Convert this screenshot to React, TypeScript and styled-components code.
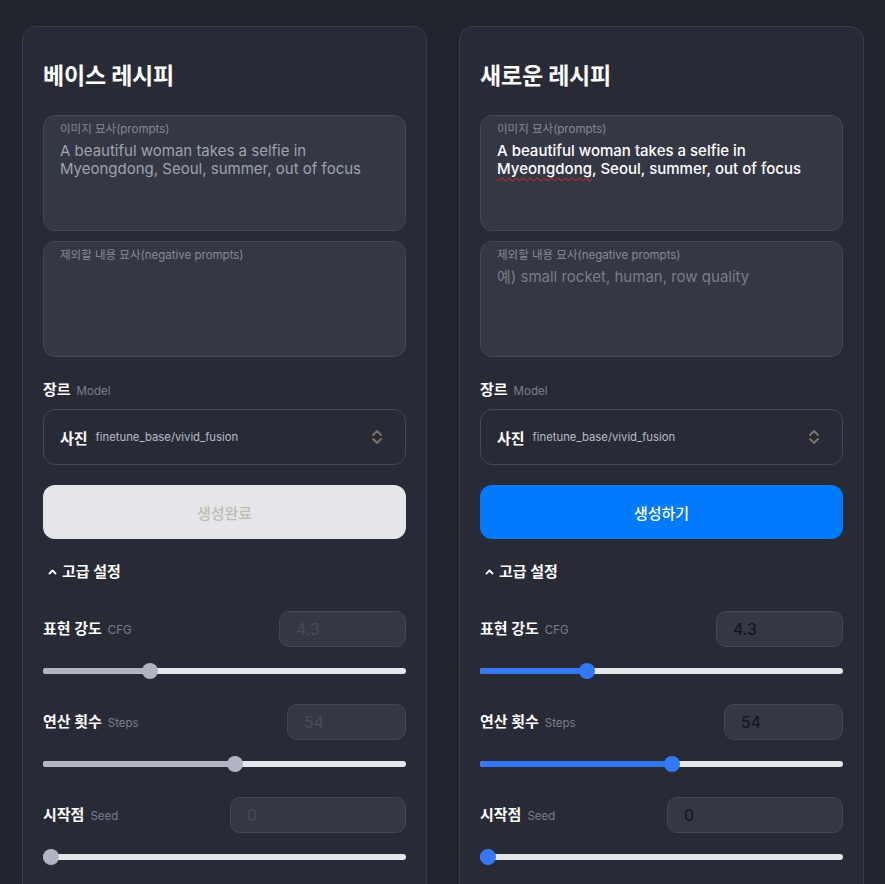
import React from "react";
import styled, { createGlobalStyle } from "styled-components";

const GlobalStyle = createGlobalStyle`
  html, body {
    margin: 0;
    padding: 0;
    background: #21242c;
  }
  body {
    font-family: Inter, "Noto Sans CJK KR", sans-serif;
    color: #f2f3f5;
  }
`;

const Page = styled.div`
  display: grid;
  grid-template-columns: 1fr 1fr;
  gap: 32px;
  padding: 26px 21px 0 22px;
  box-sizing: border-box;
  overflow: hidden;
  height: 884px;
`;

const Card = styled.section`
  background: #282b36;
  border: 1px solid #3a3d49;
  border-radius: 14px;
  padding: 34px 20px 40px;
  display: flex;
  flex-direction: column;
`;

const Title = styled.h2`
  margin: 0;
  font-size: 23px;
  line-height: 30px;
  font-weight: 700;
  color: #ffffff;
  letter-spacing: -0.2px;
`;

const PromptBox = styled.div<{ $first?: boolean }>`
  margin-top: ${(p) => (p.$first ? "24px" : "10px")};
  height: 116px;
  box-sizing: border-box;
  background: #343744;
  border: 1px solid #444754;
  border-radius: 12px;
  padding: 6px 16px;
  display: flex;
  flex-direction: column;
  gap: 6px;
`;

const PromptLabel = styled.span`
  font-size: 11.5px;
  line-height: 14px;
  color: #878a96;
`;

const PromptText = styled.div<{ $tone: "disabled" | "active" | "placeholder" }>`
  font-size: 15px;
  line-height: 18px;
  color: ${(p) =>
    p.$tone === "active" ? "#ffffff" : p.$tone === "disabled" ? "#a0a3ad" : "#7b7e8a"};
  font-weight: ${(p) => (p.$tone === "active" ? 500 : 400)};
`;

const Misspelled = styled.span`
  text-decoration: underline wavy #f0222a;
  text-decoration-thickness: 1.2px;
  text-underline-offset: 3px;
`;

const FieldLabel = styled.div<{ $top: number }>`
  margin-top: ${(p) => p.$top}px;
  display: flex;
  align-items: baseline;
  gap: 6px;
  line-height: 20px;
  white-space: nowrap;
`;

const LabelMain = styled.span`
  font-size: 15px;
  font-weight: 700;
  color: #ffffff;
`;

const LabelSub = styled.span`
  font-size: 11.5px;
  color: #7b7f8b;
`;

const Select = styled.div`
  margin-top: 8px;
  height: 56px;
  box-sizing: border-box;
  border: 1px solid #464955;
  border-radius: 12px;
  padding: 0 22px 0 16px;
  display: flex;
  align-items: center;
  gap: 8px;
`;

const SelectGenre = styled.span`
  font-size: 15px;
  font-weight: 700;
  color: #ffffff;
`;

const SelectModel = styled.span`
  flex: 1;
  font-size: 11.3px;
  color: #b9bcc5;
`;

const GenerateButton = styled.button<{ $done?: boolean }>`
  margin-top: 20px;
  height: 54px;
  border: none;
  border-radius: 12px;
  font-family: inherit;
  font-size: 15px;
  font-weight: 500;
  background: ${(p) => (p.$done ? "#e5e6ea" : "#007aff")};
  color: ${(p) => (p.$done ? "#c0bcb4" : "#ffffff")};
  cursor: ${(p) => (p.$done ? "default" : "pointer")};
`;

const AdvancedToggle = styled.div`
  margin-top: 23px;
  padding-left: 5px;
  display: flex;
  align-items: center;
  gap: 5px;
  font-size: 15px;
  font-weight: 700;
  line-height: 20px;
  color: #ffffff;
`;

const ParamRow = styled.div<{ $first?: boolean }>`
  margin-top: ${(p) => (p.$first ? "29px" : "23px")};
  display: flex;
  align-items: center;
  justify-content: space-between;
`;

const NumberInput = styled.input<{ $w: number }>`
  width: ${(p) => p.$w}px;
  height: 36px;
  box-sizing: border-box;
  background: #343744;
  border: 1px solid #444754;
  border-radius: 10px;
  padding: 0 16px;
  font-family: inherit;
  font-size: 16px;
  color: #121318;
  outline: none;
  &:disabled {
    color: #4a4d58;
    opacity: 1;
  }
`;

const SliderTrack = styled.div`
  margin-top: 14px;
  height: 20px;
  position: relative;
  display: flex;
  align-items: center;
`;

const SliderRail = styled.div`
  width: 100%;
  height: 6px;
  border-radius: 3px;
  background: #e6e7eb;
`;

const SliderFill = styled.div<{ $active: boolean }>`
  position: absolute;
  left: 0;
  top: 7px;
  height: 6px;
  border-radius: 3px;
  background: ${(p) => (p.$active ? "#3478f6" : "#b1b5c3")};
`;

const SliderThumb = styled.div<{ $active: boolean }>`
  position: absolute;
  top: 2px;
  width: 16px;
  height: 16px;
  margin-left: -8px;
  border-radius: 50%;
  background: ${(p) => (p.$active ? "#3478f6" : "#b1b5c3")};
`;

function Chevrons() {
  return (
    <svg width="12" height="18" viewBox="0 0 12 18" fill="none">
      <polyline points="2,7 6,3 10,7" stroke="#7d7467" strokeWidth="1.8" strokeLinecap="round" strokeLinejoin="round" />
      <polyline points="2,11 6,15 10,11" stroke="#7d7467" strokeWidth="1.8" strokeLinecap="round" strokeLinejoin="round" />
    </svg>
  );
}

function CaretUp() {
  return (
    <svg width="9" height="8" viewBox="0 0 9 8" fill="none">
      <polyline points="1.5,5.5 4.5,2.5 7.5,5.5" stroke="#ffffff" strokeWidth="1.8" strokeLinecap="round" strokeLinejoin="round" />
    </svg>
  );
}

function Slider({ pct, active }: { pct: number; active: boolean }) {
  const center = `calc(8px + (100% - 16px) * ${pct})`;
  return (
    <SliderTrack>
      <SliderRail />
      <SliderFill $active={active} style={{ width: center }} />
      <SliderThumb $active={active} style={{ left: center }} />
    </SliderTrack>
  );
}

const params = [
  { name: "표현 강도", sub: "CFG", value: "4.3", width: 127, pct: 0.285 },
  { name: "연산 횟수", sub: "Steps", value: "54", width: 119, pct: 0.53 },
  { name: "시작점", sub: "Seed", value: "0", width: 176, pct: 0 },
];

function RecipeCard({ title, active }: { title: string; active: boolean }) {
  return (
    <Card>
      <Title>{title}</Title>
      <PromptBox $first>
        <PromptLabel>이미지 묘사(prompts)</PromptLabel>
        <PromptText $tone={active ? "active" : "disabled"}>
          A beautiful woman takes a selfie in{" "}
          {active ? <Misspelled>Myeongdong</Misspelled> : "Myeongdong"}, Seoul, summer, out of focus
        </PromptText>
      </PromptBox>
      <PromptBox>
        <PromptLabel>제외할 내용 묘사(negative prompts)</PromptLabel>
        {active && <PromptText $tone="placeholder">예) small rocket, human, row quality</PromptText>}
      </PromptBox>
      <FieldLabel $top={23}>
        <LabelMain>장르</LabelMain>
        <LabelSub>Model</LabelSub>
      </FieldLabel>
      <Select>
        <SelectGenre>사진</SelectGenre>
        <SelectModel>finetune_base/vivid_fusion</SelectModel>
        <Chevrons />
      </Select>
      <GenerateButton $done={!active}>{active ? "생성하기" : "생성완료"}</GenerateButton>
      <AdvancedToggle>
        <CaretUp />
        고급 설정
      </AdvancedToggle>
      {params.map((p, i) => (
        <React.Fragment key={p.sub}>
          <ParamRow $first={i === 0}>
            <FieldLabel $top={0}>
              <LabelMain>{p.name}</LabelMain>
              <LabelSub>{p.sub}</LabelSub>
            </FieldLabel>
            <NumberInput $w={p.width} defaultValue={p.value} disabled={!active} readOnly />
          </ParamRow>
          <Slider pct={p.pct} active={active} />
        </React.Fragment>
      ))}
    </Card>
  );
}

export default function App() {
  return (
    <>
      <GlobalStyle />
      <Page>
        <RecipeCard title="베이스 레시피" active={false} />
        <RecipeCard title="새로운 레시피" active />
      </Page>
    </>
  );
}
